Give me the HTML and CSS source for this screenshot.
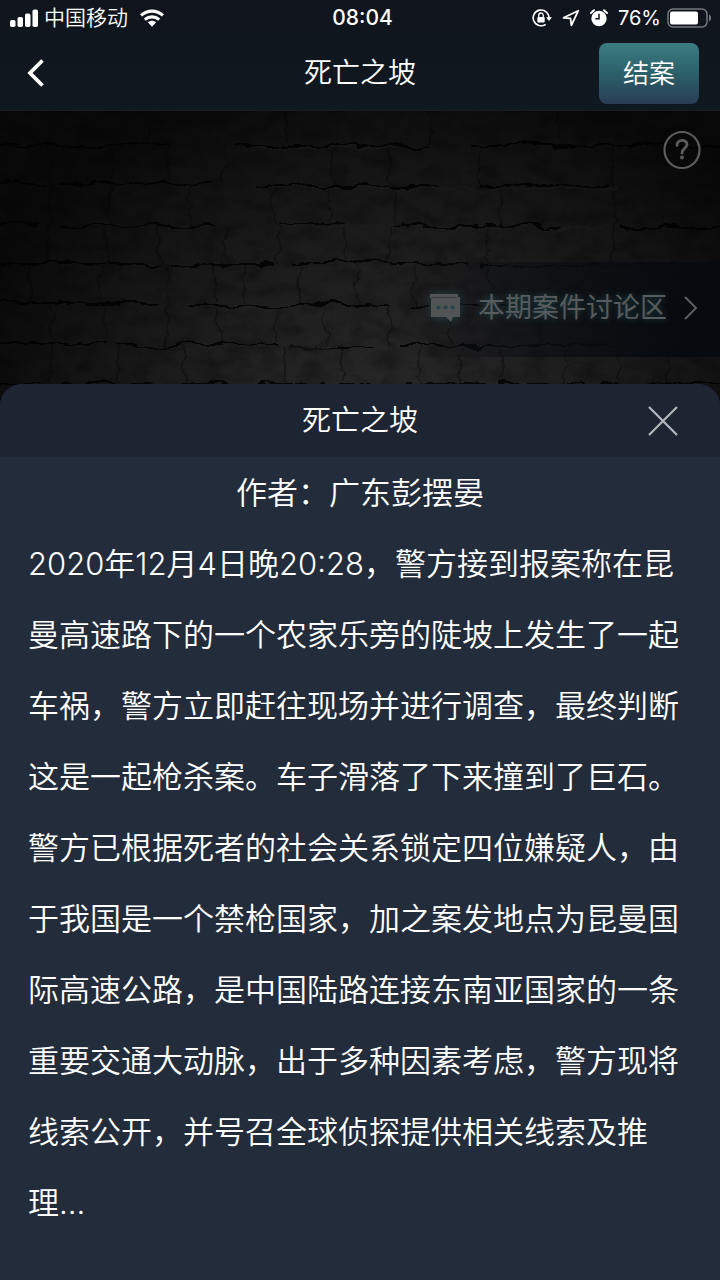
FILE: index.html
```html
<!DOCTYPE html>
<html lang="zh-CN">
<head>
<meta charset="utf-8">
<meta name="viewport" content="width=device-width, initial-scale=1">
<title>死亡之坡</title>
<link rel="stylesheet" href="styles.css">
</head>
<body>
<div class="app">
  <header class="top">
    <div class="status">
      <div class="status-left">
        <svg width="28" height="18" viewBox="0 0 28 18" fill="#fff" aria-hidden="true">
          <rect x="0" y="11" width="5.500" height="7" rx="1.800"/><rect x="7.500" y="8" width="5.500" height="10" rx="1.800"/><rect x="15" y="4.500" width="5.500" height="13.500" rx="1.800"/><rect x="22.500" y="0.500" width="5.500" height="17.500" rx="1.800"/>
        </svg>
        <span class="carrier">中国移动</span>
        <svg class="wifi" width="24" height="18" viewBox="0 0 24 18" fill="none" stroke="#fff" stroke-width="3.200" aria-hidden="true">
          <path d="M1 6.400C7.200.600 16.800.600 23 6.400"/><path d="M4.800 10.600c4.200-3.700 10.200-3.700 14.400 0"/><path d="M7.900 13.300c2.400-2 5.800-2 8.200 0L12 17.700z" fill="#fff" stroke="none"/>
        </svg>
      </div>
      <time class="clock">08:04</time>
      <div class="status-right">
        <svg width="20" height="18" viewBox="0 0 20 18" fill="none" stroke="#fff" stroke-width="1.600" aria-hidden="true">
          <path d="M13.700 15.300A7.900 7.900 0 1 1 17 9"/><path d="M14 8.300h6L17 12z" fill="#fff" stroke="none"/><rect x="5.300" y="8" width="7.400" height="5.500" rx="1" fill="#fff" stroke="none"/><path d="M6.800 8.500V6.200a2.200 2.200 0 0 1 4.400 0v2.300" stroke-width="1.300"/>
        </svg>
        <svg width="18" height="18" viewBox="0 0 18 18" fill="none" stroke="#fff" stroke-width="1.800" stroke-linejoin="round" aria-hidden="true">
          <path d="M16.300 1.700 1.500 8.800l7 .600.900 6.900z"/>
        </svg>
        <svg width="18" height="18" viewBox="0 0 18 18" aria-hidden="true">
          <circle cx="9" cy="9.500" r="7.700" fill="#fff"/><path d="M1 4 4 1.200M17 4 14 1.200" stroke="#fff" stroke-width="2" stroke-linecap="round"/><path d="M9 4.800v4.900H5.400" fill="none" stroke="#10161d" stroke-width="1.500"/>
        </svg>
        <span class="percent">76%</span>
        <svg class="battery" width="45" height="20" viewBox="0 0 45 20" aria-hidden="true">
          <rect x="1" y="1" width="39" height="18" rx="5" fill="none" stroke="#74787d" stroke-width="1.500"/><rect x="3" y="3.500" width="28" height="13" rx="2" fill="#fff"/><path d="M42 6.500c2.800 1.200 2.800 5.800 0 7z" fill="#74787d"/>
        </svg>
      </div>
    </div>
    <nav class="nav">
      <button class="back" type="button" aria-label="返回">
        <svg width="18" height="28" viewBox="0 0 18 28" fill="none" stroke="#fff" stroke-width="3.800"><path d="M15.500 1.500 3 14l12.500 12.500"/></svg>
      </button>
      <h1 class="nav-title">死亡之坡</h1>
      <button class="finish" type="button">结案</button>
    </nav>
  </header>

  <main class="stage">
    <svg class="wall" viewBox="0 0 720 300" preserveAspectRatio="none" aria-hidden="true">
      <defs>
        <radialGradient id="light" gradientUnits="userSpaceOnUse" cx="390" cy="300" r="430" gradientTransform="translate(0 60) scale(1 .8)">
          <stop offset="0" stop-color="#292828"/><stop offset=".45" stop-color="#1e1d1d"/><stop offset=".8" stop-color="#111111"/><stop offset="1" stop-color="#090909"/>
        </radialGradient>
        <filter id="rough" x="0" y="0" width="100%" height="100%">
          <feTurbulence type="fractalNoise" baseFrequency=".035 .07" numOctaves="4" seed="8" result="n"/>
          <feDisplacementMap in="SourceGraphic" in2="n" scale="14" xChannelSelector="R" yChannelSelector="G"/>
        </filter>
        <filter id="grain" x="0" y="0" width="100%" height="100%">
          <feTurbulence type="fractalNoise" baseFrequency=".04 .07" numOctaves="5" seed="3"/>
          <feColorMatrix values="0 0 0 0 0  0 0 0 0 0  0 0 0 0 0  2.500 0 0 0 -1.050"/>
        </filter>
      </defs>
      <rect width="720" height="300" fill="url(#light)"/>
      <rect width="720" height="300" filter="url(#grain)" opacity=".25"/>
      <g filter="url(#rough)" fill="none" stroke="#030303">
        <path stroke-width="2" opacity=".8" d="M-10 34H170M235 36H430M470 34H730M-10 73H45M60 73H215M255 75H440M480 74H610M-10 113H40M60 115H215M280 112H345M390 115H560M620 116H730M-10 153H160M170 155H275M290 152H470M480 155H730M-10 192H160M185 194H390M410 194H730M-10 232H105M115 234H280M290 237H370M400 236H730M-10 273H730"/>
        <path stroke="#292828" stroke-width="1" opacity=".5" d="M260 38H400M270 77H410M430 77H620M290 115H380M430 117H600M300 156H450M200 197H390M420 197H600M160 237H330M400 239H620"/>
        <path stroke-width="1.500" opacity=".4" d="M146 0v34M286 0v34M430 0v34M560 0v34M50 34v39M112 34v39M168 34v39M225 34v39M334 34v39M390 34v39M480 34v39M615 34v39M50 74v40M110 74v40M190 74v40M275 74v40M330 74v40M395 74v40M500 74v40M615 74v40M48 114v40M107 114v40M160 114v40M225 114v40M278 114v40M345 114v40M388 114v40M487 114v40M612 114v40M30 154v40M100 154v40M168 154v40M216 154v40M245 154v40M300 154v40M357 154v40M415 154v40M490 154v40M580 154v40M52 194v40M104 194v40M167 194v40M220 194v40M275 194v40M325 194v40M390 194v40M450 194v40M540 194v40M620 194v40M50 234v40M118 234v40M185 234v40M285 234v40M342 234v40M420 234v40M460 234v40M500 234v40M565 234v40M620 234v40M670 234v40"/>
      </g>
    </svg>
    <button class="help" type="button" aria-label="帮助">
      <svg width="38" height="40" viewBox="0 0 38 40" fill="none" stroke="#5c5c5c" stroke-linecap="round">
        <ellipse cx="19" cy="20" rx="17.500" ry="18" stroke-width="2.200"/><path d="M14 15.500c0-7 10-6.500 10-1 0 3.500-5 4-5 8.500" stroke-width="2.800"/><circle cx="19" cy="27.500" r="1" fill="#5c5c5c" stroke-width="2"/>
      </svg>
    </button>
    <a class="discuss" href="#discuss">
      <svg class="bubble" width="32" height="30" viewBox="0 0 32 30" aria-hidden="true">
        <path d="M1 1h28v3h2v20h-7l-2 5-5-5H2V5H1z" fill="#505455"/><path d="M2 4.500h26" stroke="#373c3d"/><g fill="#24444a"><circle cx="9.500" cy="14.500" r="2"/><circle cx="16.500" cy="14.500" r="2"/><circle cx="23.500" cy="14.500" r="2"/></g>
      </svg>
      <span class="discuss-label">本期案件讨论区</span>
      <svg class="more" width="14" height="26" viewBox="0 0 14 26" fill="none" stroke="#5a5e60" stroke-width="2" aria-hidden="true"><path d="m1 2 11 11L1 24"/></svg>
    </a>
  </main>

  <section class="sheet" aria-labelledby="case-title">
    <div class="sheet-head">
      <h2 class="sheet-title" id="case-title">死亡之坡</h2>
      <button class="close" type="button" aria-label="关闭">
        <svg width="30" height="30" viewBox="0 0 30 30" stroke="#b4b7bc" stroke-width="2.200"><path d="m1 1 28 28M29 1 1 29"/></svg>
      </button>
    </div>
    <div class="story">
      <p class="author">作者：广东彭摆晏</p>
      <p>2020年12月4日晚20:28，警方接到报案称在昆曼高速路下的一个农家乐旁的陡坡上发生了一起车祸，警方立即赶往现场并进行调查，最终判断这是一起枪杀案。车子滑落了下来撞到了巨石。警方已根据死者的社会关系锁定四位嫌疑人，由于我国是一个禁枪国家，加之案发地点为昆曼国际高速公路，是中国陆路连接东南亚国家的一条重要交通大动脉，出于多种因素考虑，警方现将线索公开，并号召全球侦探提供相关线索及推理...</p>
    </div>
  </section>
</div>
</body>
</html>
```
FILE: styles.css
```css
* { box-sizing: border-box; }
body {
  margin: 0;
  background: #232c3a;
  color: #fff;
  font-family: Inter, "Noto Sans CJK SC", sans-serif;
  font-weight: 350;
}
h1, h2, p { margin: 0; font-weight: inherit; }
button {
  border: 0;
  padding: 0;
  background: none;
  color: inherit;
  font: inherit;
  cursor: pointer;
}
svg { display: block; flex: none; }

.app {
  display: flex;
  flex-direction: column;
  min-height: 100vh;
}

.top {
  background: linear-gradient(#10151d, #101820);
  border-bottom: 1px solid #151e26;
}
.status {
  display: grid;
  grid-template-columns: 1fr auto 1fr;
  align-items: center;
  height: 36px;
  padding: 0 8px 0 10px;
}
.status-left, .status-right { display: flex; align-items: center; }
.status-left { gap: 6px; }
.status-right { justify-content: flex-end; gap: 10px; }
.carrier { font-size: 21px; line-height: 36px; }
.wifi { margin-left: 6px; }
.clock { padding-left: 3px; font-size: 21px; line-height: 36px; font-weight: 500; }
.percent { font-size: 20px; font-weight: 400; }
.battery { margin-left: -4px; }

.nav {
  display: grid;
  grid-template-columns: 1fr auto 1fr;
  align-items: center;
  height: 74px;
  padding: 0 21px;
}
.back { justify-self: start; margin-left: 6px; }
.nav-title { font-size: 28px; line-height: 40px; }
.finish {
  justify-self: end;
  height: 61px;
  padding: 0 24px 3px;
  border-radius: 8px;
  background: linear-gradient(#3b7c83, #2b6069 50%, #293d55);
  font-size: 26px;
}

.stage {
  position: relative;
  display: flex;
  flex-direction: column;
  justify-content: space-between;
  height: 273px;
  padding: 19px 0 27px;
  background: #0a0a0a;
}
.wall {
  position: absolute;
  top: 0;
  left: 0;
  width: 100%;
  height: 300px;
}
.help {
  position: relative;
  align-self: flex-end;
  margin-right: 19px;
}
.discuss {
  position: relative;
  display: flex;
  align-items: center;
  align-self: flex-end;
  height: 95px;
  padding: 0 22px 3px 28px;
  background: linear-gradient(90deg, transparent, #0b0e13aa 45%, #070a0f 90%);
  color: #565b5d;
  font-size: 27px;
  font-weight: 400;
  text-decoration: none;
  text-shadow: 0 0 6px #24474d;
}
.discuss-label { line-height: 40px; }
.bubble { margin-right: 17px; filter: drop-shadow(0 0 4px #203f44); }
.more { margin-left: 17px; }

.sheet {
  position: relative;
  flex: 1;
  border-radius: 22px 22px 0 0;
  background: #232c3a;
  overflow: hidden;
}
.sheet-head {
  display: grid;
  grid-template-columns: 1fr auto 1fr;
  align-items: center;
  height: 73px;
  padding: 0 42px;
  background: #1d2533;
}
.sheet-title { grid-column: 2; font-size: 29px; line-height: 42px; }
.close { justify-self: end; }
.story {
  padding: 0 28px 40px;
  font-size: 31px;
  line-height: 71px;
}
.author { text-align: center; }
```
